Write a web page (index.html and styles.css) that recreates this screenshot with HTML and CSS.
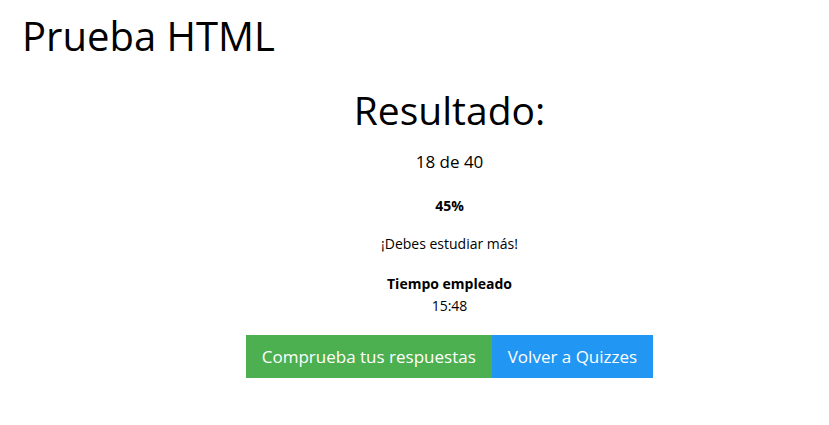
FILE: index.html
```html
<!DOCTYPE html>
<html lang="es">
<head>
<meta charset="utf-8">
<title>Prueba HTML</title>
<link rel="stylesheet" href="styles.css">
</head>
<body>
<header class="top">
  <h1 class="title">Prueba HTML</h1>
</header>
<main class="result">
  <h2 class="heading">Resultado:</h2>
  <p class="score">18 de 40</p>
  <p class="percent">45%</p>
  <p class="message">¡Debes estudiar más!</p>
  <div class="time">
    <div class="time-label">Tiempo empleado</div>
    <div class="time-value">15:48</div>
  </div>
  <div class="actions">
    <a class="btn btn-green" href="#">Comprueba tus respuestas</a>
    <a class="btn btn-blue" href="#">Volver a Quizzes</a>
  </div>
</main>
</body>
</html>
```
FILE: styles.css
```css
html, body {
  margin: 0;
  padding: 0;
  background: #fff;
  color: #000;
  font-family: "Open Sans", "Noto Sans", sans-serif;
  font-size: 14px;
}
.top {
  padding: 8px 22px 0;
}
.title {
  margin: 0;
  font-size: 40px;
  font-weight: 400;
  line-height: 56px;
}
.result {
  padding-left: 70px;
  display: flex;
  flex-direction: column;
  align-items: center;
  text-align: center;
}
.heading {
  margin: 18px 0 0;
  font-size: 39px;
  font-weight: 400;
  line-height: 56px;
}
.score {
  margin: 12px 0 0;
  font-size: 17px;
  line-height: 24px;
}
.percent {
  margin: 22px 0 0;
  font-weight: 700;
  line-height: 20px;
}
.message {
  margin: 18px 0 0;
  line-height: 20px;
}
.time {
  margin-top: 19px;
  line-height: 22px;
}
.time-label {
  font-weight: 700;
}
.actions {
  margin-top: 18px;
  display: flex;
}
.btn {
  display: block;
  padding: 10px 16px;
  font-size: 17px;
  line-height: 23px;
  color: #fff;
  text-decoration: none;
}
.btn-green { background: #4caf50; }
.btn-blue { background: #2196f3; }
```
